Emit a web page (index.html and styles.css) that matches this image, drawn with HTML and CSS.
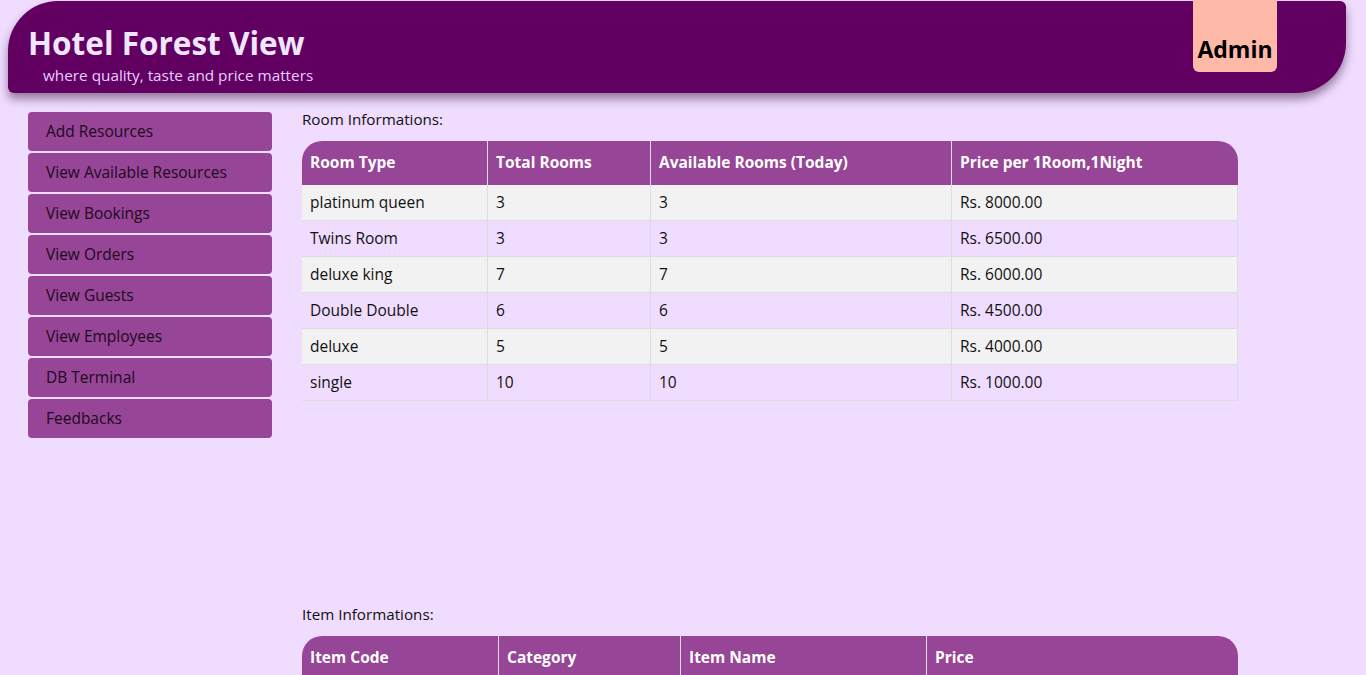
FILE: index.html
```html
<!DOCTYPE html>
<html>
<head>
<meta charset="utf-8">
<title>Hotel Forest View - Admin</title>
<link rel="stylesheet" href="styles.css">
</head>
<body>
<header class="top">
  <div class="brand">
    <h1 class="brand-title">Hotel Forest View</h1>
    <p class="brand-sub">where quality, taste and price matters</p>
  </div>
  <div class="admin">Admin</div>
</header>
<div class="layout">
  <nav class="side">
    <a class="side-btn" href="#">Add Resources</a>
    <a class="side-btn" href="#">View Available Resources</a>
    <a class="side-btn" href="#">View Bookings</a>
    <a class="side-btn" href="#">View Orders</a>
    <a class="side-btn" href="#">View Guests</a>
    <a class="side-btn" href="#">View Employees</a>
    <a class="side-btn" href="#">DB Terminal</a>
    <a class="side-btn" href="#">Feedbacks</a>
  </nav>
  <main class="content">
    <section class="block block-rooms">
      <p class="block-label">Room Informations:</p>
      <table class="data">
        <colgroup><col style="width:185px"><col style="width:163px"><col style="width:301px"><col style="width:287px"></colgroup>
        <thead>
          <tr><th>Room Type</th><th>Total Rooms</th><th>Available Rooms (Today)</th><th>Price per 1Room,1Night</th></tr>
        </thead>
        <tbody>
          <tr><td>platinum queen</td><td>3</td><td>3</td><td>Rs. 8000.00</td></tr>
          <tr><td>Twins Room</td><td>3</td><td>3</td><td>Rs. 6500.00</td></tr>
          <tr><td>deluxe king</td><td>7</td><td>7</td><td>Rs. 6000.00</td></tr>
          <tr><td>Double Double</td><td>6</td><td>6</td><td>Rs. 4500.00</td></tr>
          <tr><td>deluxe</td><td>5</td><td>5</td><td>Rs. 4000.00</td></tr>
          <tr><td>single</td><td>10</td><td>10</td><td>Rs. 1000.00</td></tr>
        </tbody>
      </table>
    </section>
    <section class="block block-items">
      <p class="block-label">Item Informations:</p>
      <table class="data">
        <colgroup><col style="width:196px"><col style="width:182px"><col style="width:246px"><col style="width:312px"></colgroup>
        <thead>
          <tr><th>Item Code</th><th>Category</th><th>Item Name</th><th>Price</th></tr>
        </thead>
        <tbody></tbody>
      </table>
    </section>
  </main>
</div>
</body>
</html>
```
FILE: styles.css
```css
html, body {
  margin: 0;
  padding: 0;
}
body {
  background: #efdcff;
  font-family: "Open Sans", "Noto Sans", sans-serif;
  font-size: 16px;
  color: #111;
}
.top {
  display: flex;
  align-items: flex-start;
  justify-content: space-between;
  height: 92px;
  margin: 1px 20px 0 8px;
  background: #620062;
  border-radius: 50px 6px 50px 6px;
  box-shadow: 0 6px 10px rgba(40, 0, 40, 0.45);
}
.brand {
  padding: 20px 0 0 20px;
}
.brand-title {
  margin: 0;
  font-size: 31.5px;
  line-height: 43px;
  font-weight: 700;
  color: #f0e6ff;
}
.brand-sub {
  margin: 1px 0 0 15px;
  font-size: 15.3px;
  line-height: 21px;
  color: #e6cfff;
}
.admin {
  margin: -1px 69px 0 0;
  width: 84px;
  height: 72px;
  box-sizing: border-box;
  padding-top: 33px;
  text-align: center;
  background: #ffb9a9;
  border-radius: 0 0 6px 6px;
  font-size: 23px;
  line-height: 32px;
  font-weight: 700;
  color: #000;
}
.layout {
  display: flex;
  gap: 30px;
  padding: 19px 0 0 28px;
}
.side {
  display: flex;
  flex-direction: column;
  gap: 2px;
  width: 244px;
  flex: none;
}
.side-btn {
  display: block;
  height: 39px;
  line-height: 39px;
  padding-left: 18px;
  background: #974597;
  border-radius: 4px;
  color: #1c0a1c;
  text-decoration: none;
  font-size: 15.5px;
}
.content {
  flex: none;
  width: 936px;
  margin-top: -2px;
}
.block-label {
  margin: 0;
  line-height: 18px;
  font-size: 15.2px;
  color: #111;
}
.block-rooms {
  height: 495px;
}
.block-items {
  min-height: 1000px;
}
.data {
  margin-top: 13px;
  width: 936px;
  table-layout: fixed;
  border-collapse: separate;
  border-spacing: 0;
}
.data th {
  background: #974597;
  color: #fff;
  font-weight: 700;
  text-align: left;
  padding: 12px 8px 13px;
  line-height: 19px;
  font-size: 15.5px;
  border-left: 1px solid #ddd;
}
.data th:first-child {
  border-left: none;
  border-top-left-radius: 20px;
}
.data th:last-child {
  border-top-right-radius: 20px;
}
.data td {
  padding: 8px 8px;
  line-height: 19px;
  font-size: 15.5px;
  border-bottom: 1px solid #ddd;
  border-left: 1px solid #ddd;
}
.data td:first-child {
  border-left: none;
}
.data td:last-child {
  border-right: 1px solid #ddd;
}
.data tbody tr:nth-child(odd) td {
  background: #f2f2f2;
}
.data tbody tr:nth-child(even) td {
  background: #efdcff;
}
```
